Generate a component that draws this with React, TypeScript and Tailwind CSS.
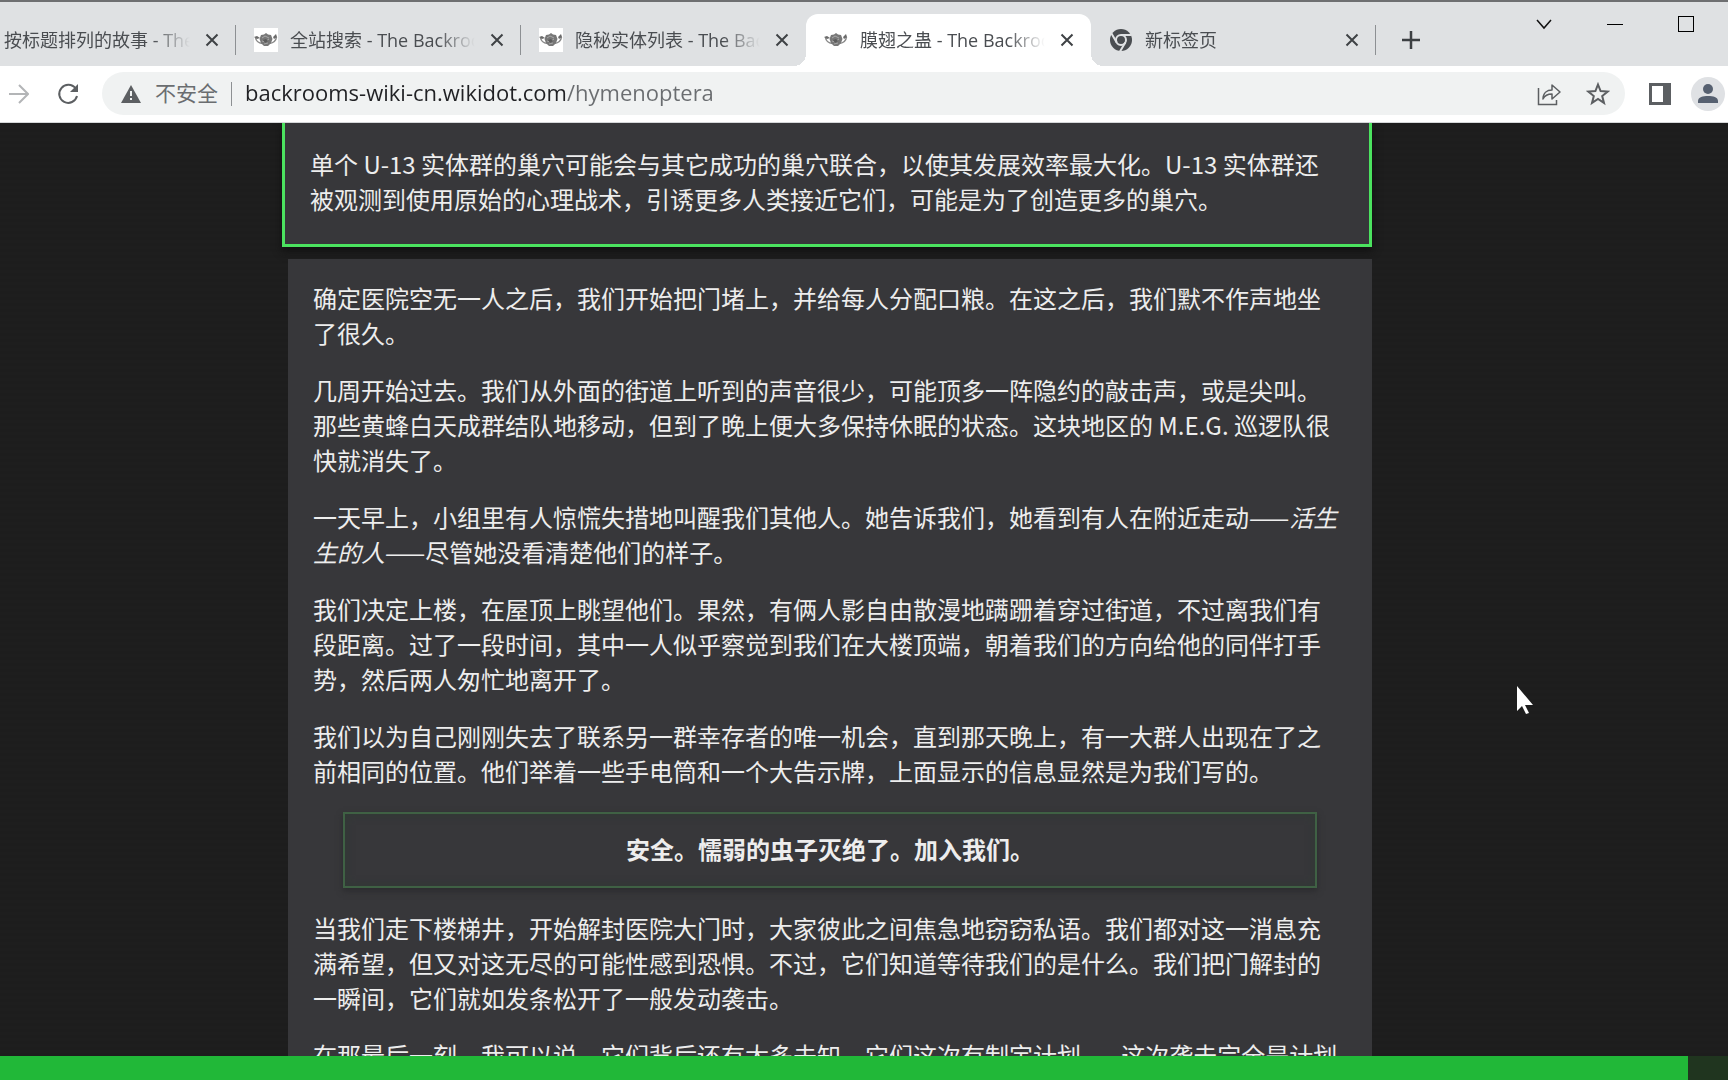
import React from 'react'
import clsx from 'clsx'

type TabIcon = 'wiki' | 'chrome' | null

interface BrowserTab {
  title: string
  icon: TabIcon
  active?: boolean
  first?: boolean
  divider?: boolean
}

interface Line {
  text: string
  lead?: string
  trail?: string
}

const TABS: BrowserTab[] = [
  { title: '按标题排列的故事 - The Backrooms', icon: null, first: true, divider: true },
  { title: '全站搜索 - The Backrooms', icon: 'wiki', divider: true },
  { title: '隐秘实体列表 - The Backrooms', icon: 'wiki' },
  { title: '膜翅之蛊 - The Backrooms', icon: 'wiki', active: true },
  { title: '新标签页', icon: 'chrome', divider: true },
]

const INTRO: Line[] = [
  { text: '单个 U-13 实体群的巢穴可能会与其它成功的巢穴联合，以使其发展效率最大化。U-13 实体群还' },
  { text: '被观测到使用原始的心理战术，引诱更多人类接近它们，可能是为了创造更多的巢穴。' },
]

const BEFORE_QUOTE: Line[][] = [
  [
    { text: '确定医院空无一人之后，我们开始把门堵上，并给每人分配口粮。在这之后，我们默不作声地坐' },
    { text: '了很久。' },
  ],
  [
    { text: '几周开始过去。我们从外面的街道上听到的声音很少，可能顶多一阵隐约的敲击声，或是尖叫。' },
    { text: '那些黄蜂白天成群结队地移动，但到了晚上便大多保持休眠的状态。这块地区的 M.E.G. 巡逻队很' },
    { text: '快就消失了。' },
  ],
  [
    { text: '一天早上，小组里有人惊慌失措地叫醒我们其他人。她告诉我们，她看到有人在附近走动——', trail: '活生' },
    { lead: '生的人', text: '——尽管她没看清楚他们的样子。' },
  ],
  [
    { text: '我们决定上楼，在屋顶上眺望他们。果然，有俩人影自由散漫地蹒跚着穿过街道，不过离我们有' },
    { text: '段距离。过了一段时间，其中一人似乎察觉到我们在大楼顶端，朝着我们的方向给他的同伴打手' },
    { text: '势，然后两人匆忙地离开了。' },
  ],
  [
    { text: '我们以为自己刚刚失去了联系另一群幸存者的唯一机会，直到那天晚上，有一大群人出现在了之' },
    { text: '前相同的位置。他们举着一些手电筒和一个大告示牌，上面显示的信息显然是为我们写的。' },
  ],
]

const AFTER_QUOTE: Line[][] = [
  [
    { text: '当我们走下楼梯井，开始解封医院大门时，大家彼此之间焦急地窃窃私语。我们都对这一消息充' },
    { text: '满希望，但又对这无尽的可能性感到恐惧。不过，它们知道等待我们的是什么。我们把门解封的' },
    { text: '一瞬间，它们就如发条松开了一般发动袭击。' },
  ],
  [{ text: '在那最后一刻，我可以说，它们背后还有太多未知，它们这次有制定计划——这次袭击完全是计划' }],
]

const WikiIcon = () => (
  <svg viewBox="0 0 24 24" className="h-6 w-6 shrink-0 bg-white" aria-hidden="true">
    <path d="M1.500 9.500c.5 3.500 3 5.500 7 6M22.500 9c-.5 3.500-3 6-7 6.500" fill="none" stroke="#8a8a8a" strokeWidth="1.500" />
    <path d="M0 9l3-1 3 2-3 1zM22 6l1 3-3 2-1-2z" fill="#6a6a6a" />
    <path d="M12 5l2 1.500 3 .5 1.500 4-1.500 4-3 3h-4l-3-3-1.500-4L7 7l3-.5z" fill="#777" />
    <path d="M8 10l3-2 4 2M8 13l3 1 4-3M10 16l4-1" fill="none" stroke="#a8a8a8" />
    <path d="M9 12l3-1 2 2-3 2z" fill="#5c5c5c" />
  </svg>
)

const ChromeIcon = () => (
  <svg viewBox="0 0 24 24" className="h-6 w-6 shrink-0" aria-hidden="true">
    <circle cx="12" cy="12" r="11" fill="#4a4d51" />
    <circle cx="12" cy="12" r="5" fill="none" stroke="#dfe1e3" strokeWidth="2" />
    <path d="M12 7h10.500M7.700 14.500L2.500 5.500M16.300 14.500L11 23.500" stroke="#dfe1e3" strokeWidth="2" />
  </svg>
)

const CloseIcon = () => (
  <svg viewBox="0 0 14 14" className="h-[14px] w-[14px]" aria-hidden="true">
    <path d="M1.500 1.500l11 11M12.500 1.500l-11 11" stroke="#3f4245" strokeWidth="2" />
  </svg>
)

const Tab = ({ tab }: { tab: BrowserTab }) => (
  <div
    className={clsx(
      'relative flex h-[52px] shrink-0 items-center gap-3 pr-[14px]',
      tab.first ? 'w-[236px] pl-1' : 'w-[285px] pl-[18px]',
      tab.active && 'rounded-t-xl bg-white',
    )}
  >
    {tab.icon === 'wiki' && <WikiIcon />}
    {tab.icon === 'chrome' && <ChromeIcon />}
    <a
      href="#article"
      className="min-w-0 flex-1 overflow-hidden text-[18px] leading-6 whitespace-nowrap text-[#4a4d51] [mask-image:linear-gradient(to_right,#000_80%,transparent)]"
    >
      {tab.title}
    </a>
    <button type="button" aria-label="关闭" className="flex h-5 w-5 items-center justify-center">
      <CloseIcon />
    </button>
    {tab.divider && <span className="absolute top-[11px] right-0 h-[30px] w-px bg-[#8d9093]" />}
    {tab.active && (
      <>
        <span className="absolute bottom-0 -left-3 h-3 w-3 bg-[radial-gradient(circle_at_0_0,transparent_12px,#fff_12px)]" />
        <span className="absolute -right-3 bottom-0 h-3 w-3 bg-[radial-gradient(circle_at_100%_0,transparent_12px,#fff_12px)]" />
      </>
    )}
  </div>
)

const TabStrip = () => (
  <div className="flex h-[66px] items-end border-t-2 border-[#6e6f71] bg-[#dfe1e3]">
    {TABS.map((tab) => (
      <Tab key={tab.title} tab={tab} />
    ))}
    <button type="button" aria-label="新标签页" className="ml-[23px] flex h-[52px] w-6 shrink-0 items-center justify-center">
      <svg viewBox="0 0 20 20" className="h-5 w-5">
        <path d="M10 1v18M1 10h18" stroke="#3c3f42" strokeWidth="2.500" />
      </svg>
    </button>
    <div className="flex flex-1 items-start justify-end gap-[51px] self-stretch pt-[12px] pr-[32px]">
      <button type="button" aria-label="搜索标签页" className="flex h-5 w-5 items-center justify-center">
        <svg viewBox="0 0 16 12" className="h-3 w-4" fill="none" stroke="#111" strokeWidth="1.500">
          <path d="M1 2l7 8 7-8" />
        </svg>
      </button>
      <button type="button" aria-label="最小化" className="flex h-5 w-5 items-center justify-center">
        <span className="h-px w-4 bg-black" />
      </button>
      <button type="button" aria-label="最大化" className="flex h-5 w-5 items-center justify-center">
        <span className="h-4 w-4 border border-black" />
      </button>
    </div>
  </div>
)

const Toolbar = () => (
  <div className="flex h-[57px] items-center border-b border-[#d5d7d9] bg-white pr-[3px] pb-[1px]">
    <button type="button" aria-label="前进" className="ml-[7px] flex h-6 w-6 items-center justify-center">
      <svg viewBox="0 0 20 20" className="h-5 w-5" fill="none" stroke="#b3b5b7" strokeWidth="2">
        <path d="M0 10h18M10 1l9 9-9 9" />
      </svg>
    </button>
    <button type="button" aria-label="重新加载" className="ml-[25px] flex h-6 w-6 items-center justify-center">
      <svg viewBox="0 0 24 24" className="h-6 w-6">
        <path d="M19.500 6.500A9 9 0 1 0 21 14" fill="none" stroke="#5c5f62" strokeWidth="2" />
        <path d="M22 2v8h-8z" fill="#5c5f62" />
      </svg>
    </button>
    <div className="ml-[22px] flex h-[43px] min-w-0 flex-1 items-center rounded-full bg-[#f0f2f2] pr-[15px] pl-[19px]">
      <svg viewBox="0 0 20 18" className="h-[18px] w-5 shrink-0" aria-hidden="true">
        <path d="M10 0l10 18H0z" fill="#5c5f62" />
        <path d="M9 6h2v5H9zM9 13h2v2H9z" fill="#f0f2f2" />
      </svg>
      <label htmlFor="address" className="ml-[14px] pb-px text-[21px] leading-7 whitespace-nowrap text-[#6a6d70]">
        不安全
      </label>
      <span className="mx-[13px] h-6 w-px shrink-0 bg-[#8d9093]" />
      {/* the domain is dark, the path after it is grey */}
      <input
        id="address"
        type="text"
        defaultValue="backrooms-wiki-cn.wikidot.com/hymenoptera"
        className="h-7 min-w-0 flex-1 bg-[linear-gradient(to_right,#202124_322px,#6a6d70_322px)] bg-clip-text pb-[2px] text-[22px] text-transparent caret-black outline-none"
      />
      <button type="button" aria-label="分享" className="flex h-6 w-6 items-center justify-center">
        <svg viewBox="0 0 24 24" className="h-6 w-6" fill="none" stroke="#5c5f62" strokeWidth="1.500">
          <path d="M1.500 6v16.500h18V18" />
          <path d="M6 17c0-6 4-9 9-9V3l8 7-8 7v-5c-4 0-7 1-9 5z" strokeLinejoin="round" />
        </svg>
      </button>
      <button type="button" aria-label="收藏" className="ml-[25px] flex h-6 w-6 items-center justify-center">
        <svg viewBox="0 0 24 24" className="h-6 w-6" fill="none" stroke="#5c5f62" strokeWidth="2">
          <path d="M12 2.500l2.600 6.600 7.100.4-5.500 4.500 1.800 6.900-6-3.900-6 3.900 1.800-6.900L2.300 9.500l7.100-.4z" />
        </svg>
      </button>
    </div>
    <button type="button" aria-label="侧边栏" className="ml-6 flex h-6 w-[22px] items-center justify-center">
      <svg viewBox="0 0 22 22" className="h-[22px] w-[22px]">
        <path d="M0 0h22v22H0zM3 3v16h11V3z" fill="#5c5f62" fillRule="evenodd" />
      </svg>
    </button>
    <button type="button" aria-label="用户" className="ml-5 flex h-[34px] w-[34px] items-center justify-center rounded-full bg-[#dfe1e4]">
      <svg viewBox="0 0 20 20" className="h-5 w-5" fill="#566070">
        <circle cx="10" cy="5" r="5" />
        <path d="M0 19v-2c0-4 5-5 10-5s10 1 10 5v2z" />
      </svg>
    </button>
  </div>
)

const Paragraph = ({ lines }: { lines: Line[] }) => (
  <p className="text-[24px] leading-[35px] whitespace-nowrap">
    {lines.map((line) => (
      <span key={line.text} className="block">
        {line.lead && <em>{line.lead}</em>}
        {line.text}
        {line.trail && <em>{line.trail}</em>}
      </span>
    ))}
  </p>
)

const Cursor = () => (
  <svg viewBox="0 0 18 28" className="absolute top-[563px] right-[194px] h-7 w-[18px]" aria-hidden="true">
    <path d="M1 0v25l5-5 4 8 3-1-4-8h8z" fill="#fff" />
  </svg>
)

export default function App() {
  return (
    <div className="flex h-screen flex-col overflow-hidden bg-[#1e1e1e] font-['Open_Sans','Noto_Sans_CJK_SC',sans-serif]">
      <TabStrip />
      <Toolbar />
      <main
        id="article"
        className="relative min-h-0 flex-1 overflow-hidden bg-[repeating-linear-gradient(#1d1d1d_0,#1d1d1d_3px,#1e1e1e_3px,#1e1e1e_6px)] pr-[356px] pl-[282px] font-['Noto_Sans_CJK_SC',sans-serif] text-[#ededed]"
      >
        <section className="border-[3px] border-t-0 border-[#4be35f] bg-[#37373a] pt-[23px] pb-7 pl-[25px] shadow-[0_4px_8px_#111]">
          <Paragraph lines={INTRO} />
        </section>
        <article className="mt-3 ml-[6px] flex flex-col gap-[22px] bg-[#37373a] px-[25px] pt-[21px]">
          {BEFORE_QUOTE.map((lines) => (
            <Paragraph key={lines[0].text} lines={lines} />
          ))}
          <blockquote className="mx-[30px] mt-[2px] border-2 border-[#3f6144] pt-[17px] pb-[20px] text-center text-[24px] leading-[35px] font-bold shadow-[0_3px_6px_#2b2b2e,inset_0_0_10px_#2f3a34]">
            安全。懦弱的虫子灭绝了。加入我们。
          </blockquote>
          {AFTER_QUOTE.map((lines) => (
            <Paragraph key={lines[0].text} lines={lines} />
          ))}
        </article>
        <Cursor />
      </main>
      <div className="h-6 shrink-0 bg-[#20351f] pr-10">
        <div className="h-full bg-[#21b838]" />
      </div>
    </div>
  )
}
